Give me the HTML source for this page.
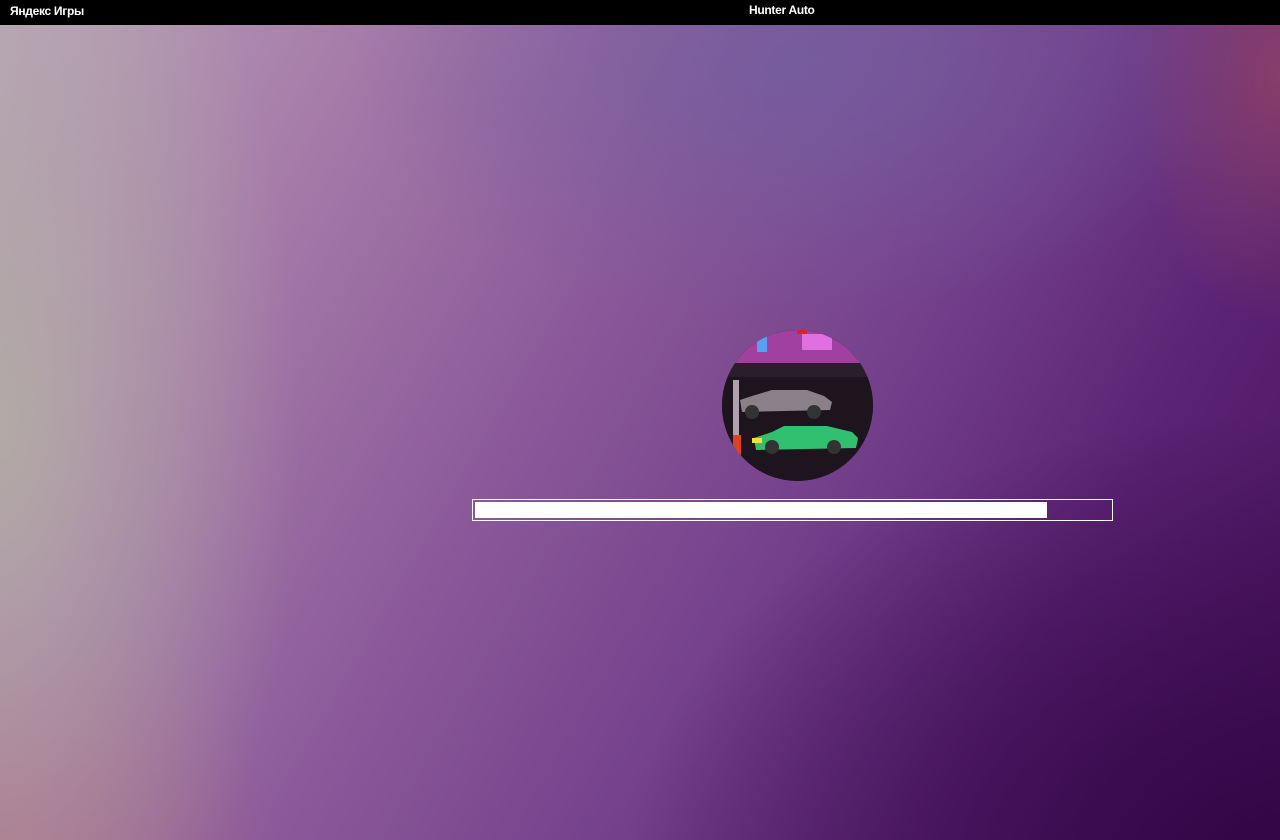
<!DOCTYPE html>
<html><head><meta charset="utf-8"><style>
html,body{margin:0;padding:0;width:1280px;height:840px;overflow:hidden;font-family:"Liberation Sans","DejaVu Sans",sans-serif}
.bg{position:absolute;left:0;top:25px;width:1280px;height:815px;
background:
radial-gradient(ellipse 450px 250px at 800px 40px, rgba(110,95,160,0.7), rgba(110,95,160,0) 100%),
radial-gradient(ellipse 150px 250px at 1280px 50px, rgba(150,70,100,0.7), rgba(150,70,100,0) 100%),
radial-gradient(ellipse 650px 450px at 1280px 840px, rgba(50,5,70,1), rgba(60,10,80,0) 100%),
radial-gradient(ellipse 300px 650px at 0px 400px, rgba(180,175,165,0.85), rgba(180,175,165,0) 100%),
radial-gradient(ellipse 280px 280px at 0px 840px, rgba(180,110,120,0.6), rgba(180,110,120,0) 100%),
linear-gradient(120deg,#b8a3b8 0%,#a57aa8 22%,#8c5a9a 42%,#74408c 62%,#5a2272 80%,#48125c 100%);}
.top{position:absolute;left:0;top:0;width:1280px;height:25px;background:#000;color:#fff;font-size:12px;font-weight:bold;letter-spacing:-0.3px}
.top .l{position:absolute;left:10px;top:4px}
.top .c{position:absolute;left:749px;top:3px}
.circ{position:absolute;left:722px;top:330px;width:151px;height:151px;border-radius:50%;overflow:hidden;background:#1c1420}
.bar{position:absolute;left:472px;top:499px;width:639px;height:20px;border:1px solid #fff}
.fill{position:absolute;left:2px;top:2px;width:572px;height:16px;background:#fff}
</style></head><body>
<div class="bg"></div>
<div class="top"><span class="l">Яндекс Игры</span><span class="c">Hunter Auto</span></div>
<div class="circ">
<svg width="151" height="151" viewBox="0 0 151 151">
<rect x="0" y="0" width="151" height="33" fill="#a040a0"/>
<rect x="35" y="6" width="10" height="16" fill="#5aa0f0"/>
<rect x="80" y="4" width="30" height="16" fill="#e070e0"/>
<rect x="75" y="0" width="10" height="4" fill="#e02020"/>
<rect x="0" y="33" width="151" height="14" fill="#2a1e2c"/>
<rect x="0" y="47" width="151" height="104" fill="#1e141e"/>
<rect x="11" y="50" width="6" height="80" fill="#b0a0b0"/>
<rect x="11" y="105" width="8" height="25" fill="#e04020"/>
<path d="M18 70 L30 66 L50 60 L85 60 L102 66 L110 72 L108 80 L20 82 Z" fill="#8a8088"/>
<circle cx="30" cy="82" r="7" fill="#333"/><circle cx="92" cy="82" r="7" fill="#333"/>
<path d="M32 108 L50 102 L62 96 L105 96 L130 102 L136 108 L134 118 L34 120 Z" fill="#30c070"/>
<circle cx="50" cy="117" r="7" fill="#333"/><circle cx="112" cy="117" r="7" fill="#333"/>
<rect x="30" y="108" width="10" height="5" fill="#f0e040"/>
</svg>
</div>
<div class="bar"><div class="fill"></div></div>
</body></html>
